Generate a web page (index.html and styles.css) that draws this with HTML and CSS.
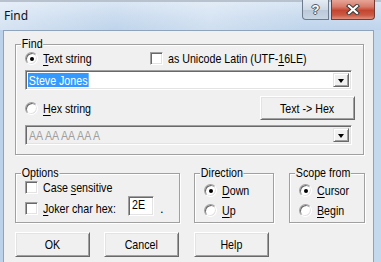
FILE: index.html
```html
<!DOCTYPE html>
<html>
<head>
<meta charset="utf-8">
<title>Find</title>
<link rel="stylesheet" href="styles.css">
</head>
<body>
<div class="window">
  <div class="titlebar">
    <span class="title">Find</span>
    <div class="caption-buttons">
      <div class="cap-btn cap-help"><span class="q">?</span></div>
      <div class="cap-btn cap-close">
        <svg width="14" height="11" viewBox="0 0 14 11"><path d="M3 2 L11 9 M11 2 L3 9" stroke="#3c3c3c" stroke-width="4.2" stroke-linecap="square" fill="none"/><path d="M3 2 L11 9 M11 2 L3 9" stroke="#fff" stroke-width="2.2" stroke-linecap="square" fill="none"/></svg>
      </div>
    </div>
  </div>
  <div class="client">
    <div class="group group-find">
      <div class="legend">Find</div>
      <div class="row row-top">
        <label class="opt opt-text"><span class="radio checked"></span><span class="t"><u>T</u>ext string</span></label>
        <label class="opt"><span class="checkbox"></span><span class="t">as Unicode Latin (UTF-<u>1</u>6LE)</span></label>
      </div>
      <div class="combo">
        <div class="combo-field"><span class="t selected">Steve Jones</span></div>
        <div class="combo-btn"></div>
      </div>
      <div class="row row-hex">
        <label class="opt"><span class="radio"></span><span class="t"><u>H</u>ex string</span></label>
        <div class="button btn-convert"><span class="t tc">Text -&gt; Hex</span></div>
      </div>
      <div class="combo combo-disabled">
        <div class="combo-field"><span class="t">AA AA AA AA A</span></div>
        <div class="combo-btn"></div>
      </div>
    </div>

    <div class="groups-row">
      <div class="group group-options">
        <div class="legend">Options</div>
        <label class="opt opt-case"><span class="checkbox"></span><span class="t">Case <u>s</u>ensitive</span></label>
        <div class="joker-row">
          <label class="opt opt-joker"><span class="checkbox"></span><span class="t"><u>J</u>oker char hex:</span></label>
          <div class="edit"><span class="t">2E</span></div>
          <span class="dot">.</span>
        </div>
      </div>
      <div class="group group-direction">
        <div class="legend">Direction</div>
        <label class="opt opt-first"><span class="radio checked"></span><span class="t"><u>D</u>own</span></label>
        <label class="opt opt-second"><span class="radio"></span><span class="t"><u>U</u>p</span></label>
      </div>
      <div class="group group-scope">
        <div class="legend">Scope from</div>
        <label class="opt opt-first"><span class="radio checked"></span><span class="t"><u>C</u>ursor</span></label>
        <label class="opt opt-second"><span class="radio"></span><span class="t"><u>B</u>egin</span></label>
      </div>
    </div>

    <div class="buttons-row">
      <div class="button btn-main"><span class="t tc">OK</span></div>
      <div class="button btn-main btn-cancel"><span class="t tc">Cancel</span></div>
      <div class="button btn-main btn-help"><span class="t tc">Help</span></div>
    </div>
  </div>
</div>
</body>
</html>
```

FILE: styles.css
```css
* { box-sizing: border-box; }
html, body { margin: 0; padding: 0; }
body {
  width: 381px;
  height: 262px;
  overflow: hidden;
  background: #c6d9ee;
  font-family: "Liberation Sans Narrow", "Arial Narrow", "Liberation Sans", Arial, sans-serif;
  font-size: 13px;
  color: #000;
}
u { text-decoration: underline; text-underline-offset: 2px; }

/* the dialog font is a narrow sans: Liberation Sans squeezed to Arial Narrow widths */
.t {
  display: inline-block;
  white-space: nowrap;
  transform: scaleX(0.82);
  transform-origin: 0 50%;
}
.tc { transform-origin: 50% 50%; }

.window {
  width: 381px;
  height: 262px;
  display: flex;
  flex-direction: column;
  background: linear-gradient(90deg, #bcd2ea, #cbdcf0 40%, #c4d8ee);
}

.titlebar {
  height: 30px;
  flex: none;
  display: flex;
  align-items: flex-start;
  background:
    linear-gradient(90deg, rgba(255,255,255,0.35), rgba(255,255,255,0) 30%, rgba(255,255,255,0.25) 55%, rgba(255,255,255,0) 80%),
    linear-gradient(#d9e6f4, #c9dbef 55%, #bfd4eb);
  border-top: 2px solid #b7c2ce;
}
.title {
  font-family: "Noto Sans", "Open Sans", sans-serif;
  font-size: 12px;
  line-height: 16px;
  margin: 6px 0 0 4px;
  color: #111;
}
.caption-buttons {
  margin-left: auto;
  margin-right: 6px;
  margin-top: -2px;
  display: flex;
  gap: 2px;
}
.cap-btn {
  height: 20px;
  display: flex;
  align-items: center;
  justify-content: center;
  border: 1px solid #6d7b8d;
  border-top: 0;
}
.cap-help {
  width: 27px;
  border-radius: 0 0 0 4px;
  background: linear-gradient(#e4ebf3, #cdd8e5 50%, #bac8d8 52%, #c9d6e4);
}
.q {
  font-family: "Liberation Sans", sans-serif;
  font-weight: bold;
  font-size: 13px;
  line-height: 13px;
  color: #fff;
  text-shadow: 0 0 1px #4a5260, 0 0 1px #4a5260, 1px 0 0 #5a6270, -1px 0 0 #5a6270, 0 1px 0 #5a6270, 0 -1px 0 #5a6270;
}
.cap-close {
  width: 44px;
  border-color: #7a3a34;
  border-radius: 0 0 4px 0;
  background: linear-gradient(#e6a597, #d87b6b 35%, #c4452f 55%, #cc5a44 80%, #e0917f);
}

.client {
  flex: 1;
  margin: 0 7px 0 3px;
  background: #f0f0f0;
  border: 1px solid #8fa3bb;
  border-bottom: 0;
  padding: 13px 0 0 11px;
}

.group {
  border: 1px solid #a0a0a0;
  box-shadow: inset 1px 1px #fff, 1px 1px #fff;
  padding: 0 8px 0 9px;
}
.legend {
  display: table;
  margin: -9px 0 0 -4px;
  padding: 0 1px;
  line-height: 15px;
  white-space: nowrap;
  background: #f0f0f0;
  transform: scaleX(0.82);
  transform-origin: 0 50%;
}

.group-find {
  width: 349px;
  height: 111px;
}

.row { display: flex; align-items: center; }
.row-top { height: 15px; }
.row-hex {
  height: 24px;
  margin-top: 6px;
  justify-content: space-between;
}

.opt {
  display: flex;
  align-items: center;
  gap: 5px;
  line-height: 15px;
  height: 15px;
  white-space: nowrap;
}
.opt-text { width: 125px; }

.radio {
  width: 13px;
  height: 13px;
  flex: none;
  border-radius: 50%;
  background: #fff;
  border: 1px solid;
  border-color: #a0a0a0 #fff #fff #a0a0a0;
  box-shadow: inset 1px 1px #696969, inset -1px -1px #e3e3e3;
  display: flex;
  align-items: center;
  justify-content: center;
}
.radio.checked::after {
  content: "";
  width: 4px;
  height: 4px;
  border-radius: 50%;
  background: #000;
}
.checkbox {
  width: 13px;
  height: 13px;
  flex: none;
  background: #fff;
  border: 1px solid;
  border-color: #a0a0a0 #fff #fff #a0a0a0;
  box-shadow: inset 1px 1px #696969, inset -1px -1px #e3e3e3;
}

.combo {
  width: 327px;
  height: 20px;
  margin-top: 4px;
  display: flex;
  background: #fff;
  border: 1px solid;
  border-color: #a0a0a0 #fff #fff #a0a0a0;
  box-shadow: inset 1px 1px #696969, inset -1px -1px #e3e3e3;
  padding: 2px;
}
.combo-disabled {
  margin-top: 5px;
  background: #f0f0f0;
}
.combo-field {
  flex: 1;
  line-height: 15px;
  white-space: nowrap;
  overflow: hidden;
}
.combo-disabled .combo-field {
  color: #9d9d9d;
  padding-left: 1px;
}
.selected {
  background: #3399ff;
  color: #fff;
  padding: 0 1px;
}
.combo-btn {
  width: 16px;
  flex: none;
  background: #f0f0f0;
  border: 1px solid;
  border-color: #e3e3e3 #696969 #696969 #e3e3e3;
  box-shadow: inset 1px 1px #fff, inset -1px -1px #a0a0a0;
  display: flex;
  align-items: center;
  justify-content: center;
}
.combo-btn::after {
  content: "";
  width: 0;
  height: 0;
  border-left: 3.5px solid transparent;
  border-right: 3.5px solid transparent;
  border-top: 4px solid #000;
  margin-top: 1px;
}

.button {
  display: flex;
  align-items: center;
  justify-content: center;
  background: #f0f0f0;
  border: 1px solid;
  border-color: #fff #696969 #696969 #fff;
  box-shadow: inset 1px 1px #e3e3e3, inset -1px -1px #a0a0a0;
  line-height: 15px;
}
.btn-convert {
  width: 95px;
  height: 24px;
}

.groups-row {
  display: flex;
  margin-top: 18px;
}
.groups-row .group { height: 50px; }
.group-options { width: 165px; }
.group-direction { width: 80px; margin-left: 14px; }
.group-scope { width: 76px; margin-left: 15px; }

.opt-case { margin-top: 0; }
.joker-row {
  display: flex;
  align-items: flex-end;
  height: 20px;
  margin-top: 1px;
}
.opt-joker { width: 103px; flex: none; }
.edit {
  width: 26px;
  height: 20px;
  flex: none;
  background: #fff;
  border: 1px solid;
  border-color: #a0a0a0 #fff #fff #a0a0a0;
  box-shadow: inset 1px 1px #696969, inset -1px -1px #e3e3e3;
  padding: 1px 0 0 3px;
  line-height: 14px;
}
.dot {
  margin-left: 6px;
  line-height: 15px;
}

.opt-first { margin-top: 3px; }
.opt-second { margin-top: 5px; }

.buttons-row {
  display: flex;
  margin-top: 9px;
}
.btn-main {
  width: 75px;
  height: 25px;
}
.btn-cancel { margin-left: 14px; }
.btn-help { margin-left: 15px; }
```
